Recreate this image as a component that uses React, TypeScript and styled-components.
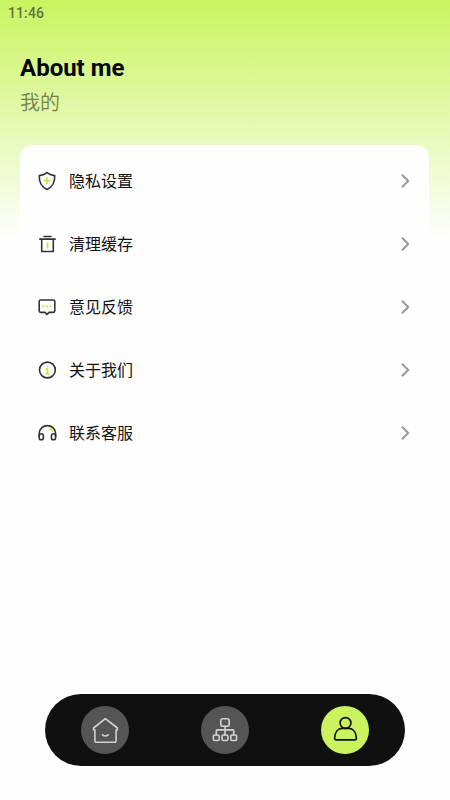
import React from "react";
import styled, { createGlobalStyle } from "styled-components";

const Global = createGlobalStyle`
  * { box-sizing: border-box; }
  body { margin: 0; background: #fefefe; }
`;

const Screen = styled.div`
  width: 450px;
  height: 800px;
  display: flex;
  flex-direction: column;
  overflow: hidden;
  background: linear-gradient(180deg, #c9f45f 0px, #fefefe 240px);
  font-family: Roboto, "Noto Sans CJK SC", sans-serif;
`;

const StatusBar = styled.div`
  height: 26px;
  padding-left: 8px;
  font-size: 14px;
  font-weight: 500;
  line-height: 26px;
  letter-spacing: 0.1px;
  color: #65733c;
`;

const Header = styled.header`
  height: 119px;
  padding: 27px 20px 0;
`;

const Title = styled.h1`
  margin: 0;
  font-size: 24px;
  font-weight: 700;
  line-height: 30px;
  color: #050505;
`;

const Subtitle = styled.div`
  margin-top: 5px;
  font-size: 20px;
  font-weight: 350;
  line-height: 30px;
  color: #748051;
`;

const Card = styled.main`
  margin: 0 21px 0 20px;
  padding: 4px 16px 0 17px;
  height: 325px;
  border-radius: 12px;
  background: #fefefe;
`;

const Row = styled.div`
  display: flex;
  align-items: center;
  height: 63px;
`;

const RowLabel = styled.span`
  flex: 1;
  margin-left: 12px;
  padding-top: 2px;
  font-size: 16px;
  line-height: 24px;
  color: #111;
`;

const RowIcon = styled.svg`
  width: 20px;
  height: 20px;
  fill: none;
  stroke: #333;
  stroke-width: 1.6;
  stroke-linecap: round;
  stroke-linejoin: round;
  .accent { stroke: #bdf03c; stroke-width: 1.8; }
`;

const Chevron = styled.svg`
  width: 16px;
  height: 16px;
  fill: none;
  stroke: #999;
  stroke-width: 2;
`;

const NavBar = styled.nav`
  display: flex;
  justify-content: space-between;
  align-items: center;
  width: 360px;
  height: 72px;
  margin: auto auto 34px;
  padding: 0 36px;
  border-radius: 36px;
  background: #101010;
`;

const NavButton = styled.button<{ $active?: boolean }>`
  display: grid;
  place-items: center;
  width: 48px;
  height: 48px;
  padding: 0;
  border: 0;
  border-radius: 50%;
  background: ${(p) => (p.$active ? "#c9f45f" : "#555")};
  color: ${(p) => (p.$active ? "#101010" : "#d2d2d2")};
`;

const NavIcon = styled.svg`
  width: 28px;
  height: 28px;
  fill: none;
  stroke: currentColor;
  stroke-width: 1.6;
  stroke-linecap: round;
  stroke-linejoin: round;
`;

const rows = [
  {
    label: "隐私设置",
    icon: (
      <>
        <path d="M10 1.6C12.2 3.5 14.7 4.1 17.7 4.6C18 9.8 16 15.7 10 18.4C4 15.7 2 9.8 2.3 4.6C5.3 4.1 7.8 3.5 10 1.6Z" />
        <path className="accent" d="M10 6.9v5.4M7.3 9.6h5.4" />
      </>
    ),
  },
  {
    label: "清理缓存",
    icon: (
      <>
        <path d="M7 2.5h7M2.8 5.1h15.4M4.7 5.5v12h11.6v-12" />
        <path className="accent" d="M10.5 9.2v4.4" />
      </>
    ),
  },
  {
    label: "意见反馈",
    icon: (
      <>
        <path d="M3.8 3h12.4c1 0 1.6.6 1.6 1.6v9.2c0 1-.6 1.6-1.6 1.6h-4.1L10 17.4l-2.1-2H3.8c-1 0-1.6-.6-1.6-1.6V4.6C2.2 3.6 2.8 3 3.8 3Z" />
        <path className="accent" d="M6 9.4h.5M9.7 9.4h.6M13.5 9.4h.5" />
      </>
    ),
  },
  {
    label: "关于我们",
    icon: (
      <>
        <circle cx="10.4" cy="10" r="7.9" />
        <path className="accent" d="M10.4 6.2v.1M9.6 9h.8v4.6M9.4 13.8h2" />
      </>
    ),
  },
  {
    label: "联系客服",
    icon: (
      <>
        <path d="M2.2 13.5V10.4C2.2 6 6 2.6 10.4 2.6S18.6 6 18.6 10.4v3.1" />
        <rect x="2.2" y="10.8" width="4.2" height="6" rx="2.1" />
        <rect x="14.4" y="10.8" width="4.2" height="6" rx="2.1" />
        <path className="accent" d="M13.2 5.4 15.6 8" />
      </>
    ),
  },
];

export default function App() {
  return (
    <>
      <Global />
      <Screen>
        <StatusBar>11:46</StatusBar>
        <Header>
          <Title>About me</Title>
          <Subtitle>我的</Subtitle>
        </Header>
        <Card>
          {rows.map((row) => (
            <Row key={row.label}>
              <RowIcon viewBox="0 0 20 20">{row.icon}</RowIcon>
              <RowLabel>{row.label}</RowLabel>
              <Chevron viewBox="0 0 16 16">
                <path d="M5 1.8 11.2 8 5 14.2" />
              </Chevron>
            </Row>
          ))}
        </Card>
        <NavBar>
          <NavButton aria-label="Home">
            <NavIcon viewBox="0 0 28 28">
              <path d="M14.4 2.6 26.4 12v2h-1.3v10.9a1.4 1.4 0 0 1-1.4 1.4H5.3a1.4 1.4 0 0 1-1.4-1.4V14H2.6V12L14.4 2.6ZM11.6 18.9c1.5 1.5 4.1 1.5 5.6 0" />
            </NavIcon>
          </NavButton>
          <NavButton aria-label="Categories">
            <NavIcon viewBox="0 0 28 28">
              <rect x="9.8" y="2.7" width="8.4" height="7.6" rx="2" />
              <path d="M14 10.3V19M5.3 19v-4.3q0-.8.8-.8h15.8q.8 0 .8.8V19" />
              <rect x="2.4" y="19" width="5.8" height="5.5" rx="1.3" />
              <rect x="11.1" y="19" width="5.8" height="5.5" rx="1.3" />
              <rect x="19.8" y="19" width="5.8" height="5.5" rx="1.3" />
            </NavIcon>
          </NavButton>
          <NavButton $active aria-label="Profile">
            <NavIcon viewBox="0 0 28 28">
              <circle cx="14.5" cy="7" r="5.4" />
              <path d="M11.2 12.4h6.6c4.4 0 7.6 4 7.6 9.8 0 1-.7 1.7-1.7 1.7H5.3c-1 0-1.7-.7-1.7-1.7 0-5.8 3.2-9.8 7.6-9.8Z" />
            </NavIcon>
          </NavButton>
        </NavBar>
      </Screen>
    </>
  );
}
